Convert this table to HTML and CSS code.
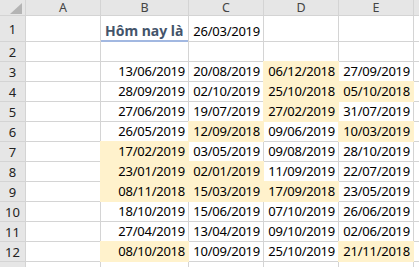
FILE: index.html
```html
<!DOCTYPE html>
<html>
<head>
<meta charset="utf-8">
<link rel="stylesheet" href="styles.css">
</head>
<body>
<div class="sheet">
  <div class="hd corner"><svg class="tri" width="12" height="11" viewBox="0 0 12 11"><polygon points="12,0 12,11 0,11" fill="#b4b4b4"/></svg></div>
  <div class="hd">A</div><div class="hd">B</div><div class="hd">C</div><div class="hd">D</div><div class="hd">E</div><div class="hd"></div>

  <div class="rh">1</div><div class="c"></div><div class="c title">Hôm nay là</div><div class="c">26/03/2019</div><div class="c"></div><div class="c"></div><div class="c"></div>
  <div class="rh">2</div><div class="c"></div><div class="c"></div><div class="c"></div><div class="c"></div><div class="c"></div><div class="c"></div>
  <div class="rh">3</div><div class="c"></div><div class="c">13/06/2019</div><div class="c">20/08/2019</div><div class="c f">06/12/2018</div><div class="c">27/09/2019</div><div class="c"></div>
  <div class="rh">4</div><div class="c"></div><div class="c">28/09/2019</div><div class="c">02/10/2019</div><div class="c f">25/10/2018</div><div class="c f">05/10/2018</div><div class="c"></div>
  <div class="rh">5</div><div class="c"></div><div class="c">27/06/2019</div><div class="c">19/07/2019</div><div class="c f">27/02/2019</div><div class="c">31/07/2019</div><div class="c"></div>
  <div class="rh">6</div><div class="c"></div><div class="c">26/05/2019</div><div class="c f">12/09/2018</div><div class="c">09/06/2019</div><div class="c f">10/03/2019</div><div class="c"></div>
  <div class="rh">7</div><div class="c"></div><div class="c f">17/02/2019</div><div class="c">03/05/2019</div><div class="c">09/08/2019</div><div class="c">28/10/2019</div><div class="c"></div>
  <div class="rh">8</div><div class="c"></div><div class="c f">23/01/2019</div><div class="c f">02/01/2019</div><div class="c">11/09/2019</div><div class="c">22/07/2019</div><div class="c"></div>
  <div class="rh">9</div><div class="c"></div><div class="c f">08/11/2018</div><div class="c f">15/03/2019</div><div class="c f">17/09/2018</div><div class="c">23/05/2019</div><div class="c"></div>
  <div class="rh">10</div><div class="c"></div><div class="c">18/10/2019</div><div class="c">15/06/2019</div><div class="c">07/10/2019</div><div class="c">26/06/2019</div><div class="c"></div>
  <div class="rh">11</div><div class="c"></div><div class="c">27/04/2019</div><div class="c">13/04/2019</div><div class="c">09/10/2019</div><div class="c">02/06/2019</div><div class="c"></div>
  <div class="rh">12</div><div class="c"></div><div class="c f">08/10/2018</div><div class="c">10/09/2019</div><div class="c">25/10/2019</div><div class="c f">21/11/2018</div><div class="c"></div>
  <div class="rh"></div><div class="c"></div><div class="c"></div><div class="c"></div><div class="c"></div><div class="c"></div><div class="c"></div>
</div>
</body>
</html>
```

FILE: styles.css
```css
html, body {
  margin: 0;
  padding: 0;
  background: #ffffff;
  overflow: hidden;
}

body {
  width: 419px;
  height: 267px;
}

.sheet {
  display: grid;
  grid-template-columns: 25px 74px 87px 74px 74px 74px 1fr;
  grid-template-rows: 15px 25px 19px repeat(10, 19px) 1fr;
  gap: 1px;
  width: 419px;
  height: 267px;
  background: #d4d4d4;
  font-family: "Noto Sans", "Open Sans", sans-serif;
  font-size: 13px;
  color: #000000;
}

.hd {
  background: #e6e6e6;
  color: #444444;
  display: flex;
  align-items: center;
  justify-content: center;
  font-size: 12.5px;
  line-height: 15px;
}

.corner {
  position: relative;
}

.tri {
  position: absolute;
  left: 10px;
  top: 3px;
}

.rh {
  background: #e6e6e6;
  color: #222222;
  display: flex;
  align-items: center;
  justify-content: center;
  font-size: 13px;
}

.c {
  background: #ffffff;
  display: flex;
  align-items: flex-end;
  justify-content: flex-end;
  padding: 0 3px 1px 0;
  line-height: 17px;
  letter-spacing: -0.25px;
  white-space: nowrap;
}

.f {
  background: #fff2cc;
  box-shadow: 0 0 0 1px #fff2cc;
}

.title {
  justify-content: flex-start;
  padding: 0 0 2px 4px;
  font-weight: bold;
  font-size: 14px;
  letter-spacing: 0;
  color: #44546a;
  box-shadow: 0 1px 0 #a2b8e1, inset 0 -1px 0 #a2b8e1;
}
```
